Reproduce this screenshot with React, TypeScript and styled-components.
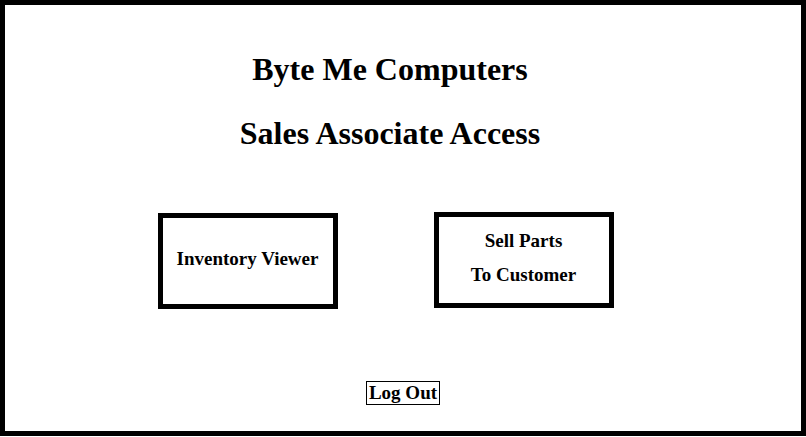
import React from "react";
import styled, { createGlobalStyle } from "styled-components";

const Global = createGlobalStyle`
  html, body { margin: 0; padding: 0; background: #ffffff; }
  body { font-family: "Liberation Serif", "Times New Roman", serif; color: #000; }
`;

const Frame = styled.div`
  box-sizing: border-box;
  width: 806px;
  height: 436px;
  border: 5px solid #000;
  display: flex;
  flex-direction: column;
  padding-top: 46px;
`;

const Header = styled.header`
  display: flex;
  flex-direction: column;
  align-items: center;
  gap: 28px;
  padding-right: 26px;
`;

const Title = styled.h1`
  margin: 0;
  font-size: 32px;
  line-height: 36px;
  font-weight: bold;
`;

const ActionRow = styled.div`
  display: flex;
  justify-content: center;
  align-items: flex-start;
  gap: 96px;
  padding-right: 35px;
  margin-top: 61px;
`;

const ActionBox = styled.button<{ $drop?: number }>`
  box-sizing: border-box;
  width: 180px;
  height: 96px;
  border: 5px solid #000;
  background: #fff;
  margin: ${(p) => p.$drop ?? 0}px 0 0 0;
  padding: 0 0 4px 0;
  display: flex;
  flex-direction: column;
  align-items: center;
  justify-content: center;
  font-family: "Liberation Serif", "Times New Roman", serif;
  font-size: 19px;
  font-weight: bold;
  color: #000;
  line-height: 34px;
`;

const Footer = styled.div`
  display: flex;
  justify-content: center;
  margin-top: 72px;
`;

const LogOut = styled.button`
  box-sizing: border-box;
  height: 24px;
  border: 1px solid #000;
  background: #fff;
  padding: 0 2px;
  font-family: "Liberation Serif", "Times New Roman", serif;
  font-size: 19px;
  font-weight: bold;
  line-height: 22px;
  color: #000;
`;

export default function App() {
  return (
    <>
      <Global />
      <Frame>
        <Header>
          <Title>Byte Me Computers</Title>
          <Title>Sales Associate Access</Title>
        </Header>
        <ActionRow>
          <ActionBox $drop={1}>Inventory Viewer</ActionBox>
          <ActionBox>
            <span>Sell Parts</span>
            <span>To Customer</span>
          </ActionBox>
        </ActionRow>
        <Footer>
          <LogOut>Log Out</LogOut>
        </Footer>
      </Frame>
    </>
  );
}
